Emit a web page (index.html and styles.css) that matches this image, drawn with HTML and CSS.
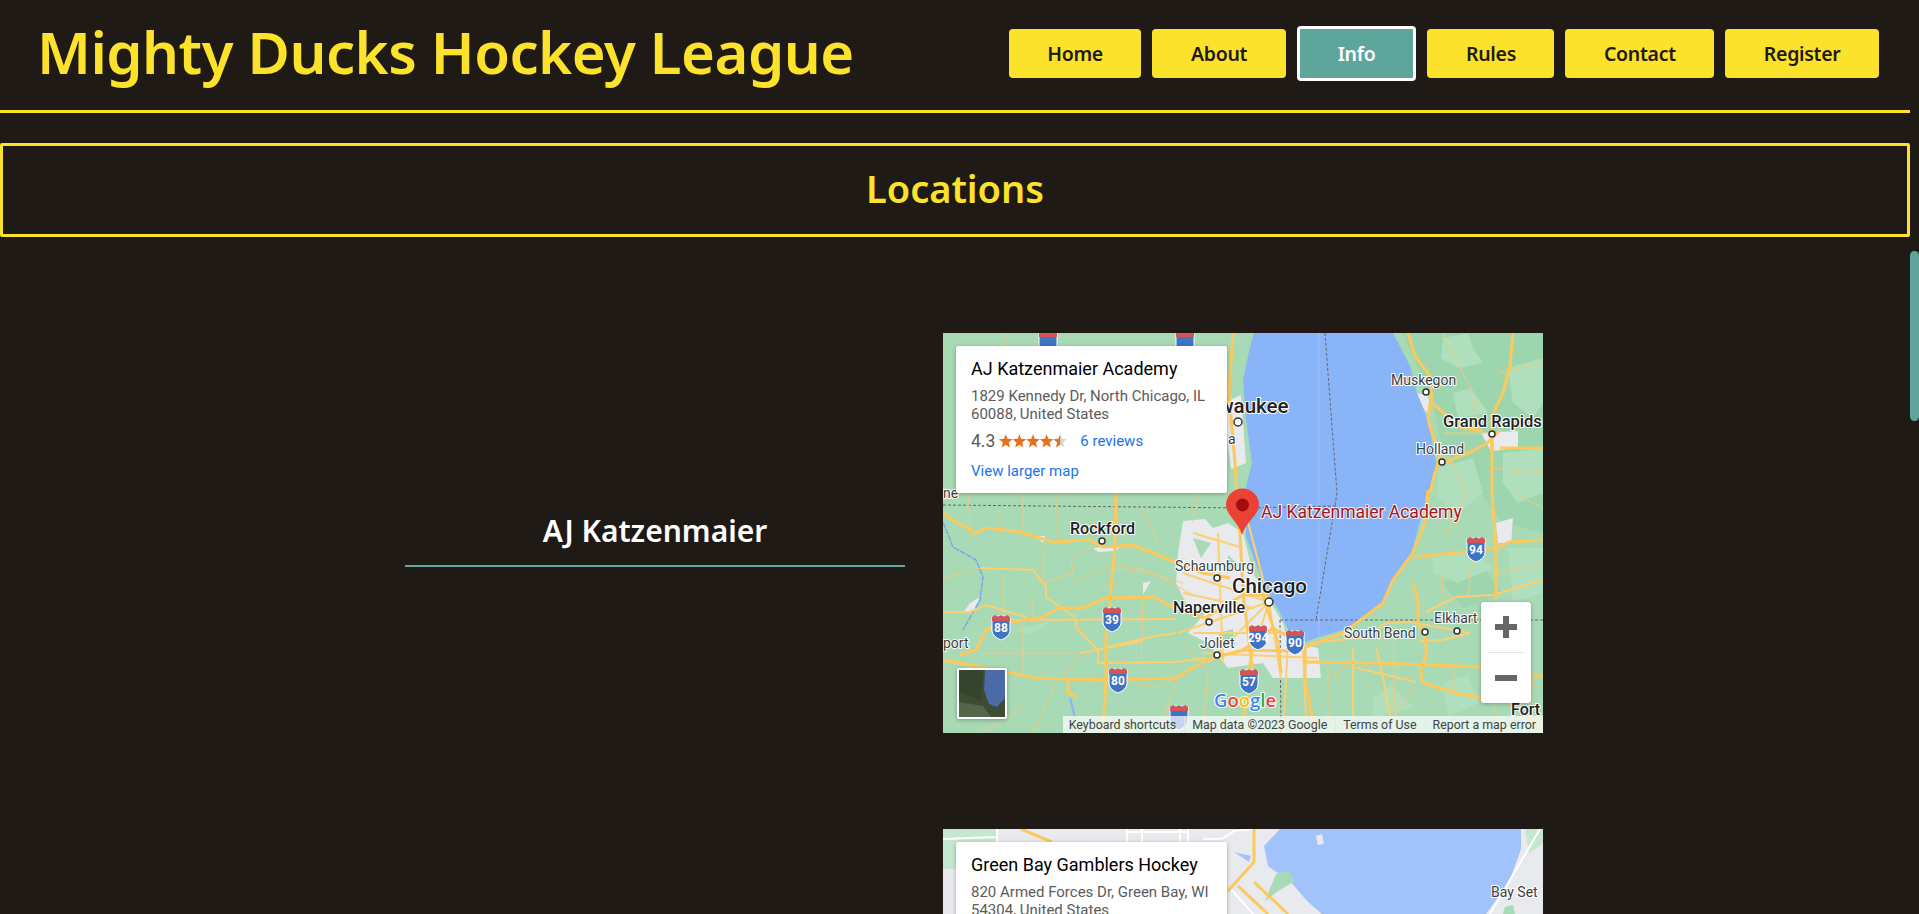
FILE: index.html
```html
<!DOCTYPE html>
<html>
	<head>
		<meta charset="utf-8">
		<title>Mighty Ducks Hockey League</title>
		<link rel="stylesheet" href="styles.css">
	</head>
	<body>
		<div class="page">
			<header class="top">
				<h1>Mighty Ducks Hockey League</h1>
				<nav class="nav">
					<a href="#">Home</a>
					<a href="#">About</a>
					<a href="#" class="current">Info</a>
					<a href="#">Rules</a>
					<a href="#">Contact</a>
					<a href="#">Register</a>
				</nav>
			</header>
			<h2 class="banner">Locations</h2>

			<div class="location">
				<h3>AJ Katzenmaier</h3>
				<div class="map">
					<svg class="map-art" viewBox="0 0 600 400">
						<defs>
							<g id="shield">
								<path d="M-9 -10 Q0 -13 9 -10 L9 4 Q8 10 0 13 Q-8 10 -9 4 Z" fill="#3f74c4" stroke="#fff" stroke-width="1"/>
								<path d="M-9 -10 L-6 -12 L-3 -10 L0 -12 L3 -10 L6 -12 L9 -10 L9 -6 L-9 -6 Z" fill="#d3555a"/>
							</g>
						</defs>
						<rect width="600" height="400" fill="#a8dab5"/>
						<!-- darker and paler land on the east side -->
						<g fill="#9dd6ae">
							<path d="M460 0 L600 0 L600 200 L560 190 L530 150 L500 120 L490 70 Z"/>
							<path d="M500 250 L540 235 L560 260 L520 275 Z"/>
						</g>
						<g fill="#b0dfbd">
							<path d="M500 5 L525 0 L530 15 L540 30 L515 35 L498 25 Z"/>
							<path d="M510 60 L528 55 L545 80 L515 85 Z"/>
							<path d="M565 35 L600 25 L600 70 L590 85 L570 70 Z"/>
							<path d="M560 120 L600 115 L600 160 L575 170 L560 150 Z"/>
							<path d="M495 135 L530 125 L540 160 L515 180 L495 165 Z"/>
							<path d="M490 225 L530 218 L550 235 L515 250 L490 240 Z"/>
							<path d="M565 215 L600 215 L600 260 L570 270 Z"/>
							<path d="M430 365 L450 352 L470 375 L430 384 Z"/>
							<path d="M500 350 L525 342 L535 370 L505 384 Z"/>
							<path d="M75 296 L110 288 L85 302 Z"/>
						</g>
						<!-- towns -->
						<g fill="#e8eaed">
							<path d="M240 188 L262 186 L270 195 L285 190 L300 200 L310 240 L340 290 L345 310 L375 315 L378 345 L330 345 L320 330 L285 335 L265 310 L245 300 L262 280 L243 270 L233 250 L235 220 Z"/>
							<path d="M280 70 L298 62 L303 130 L288 136 Z"/>
							<path d="M538 100 L575 98 L575 115 L548 118 Z"/>
							<path d="M473 60 L485 62 L487 80 L482 78 Z"/>
							<path d="M150 215 L180 212 L172 218 L155 219 Z"/>
							<path d="M92 203 L102 203 L100 210 Z"/>
							<path d="M27 270 L37 264 L30 280 L20 280 Z"/>
							<path d="M200 250 L208 248 L200 262 Z"/>
							<path d="M553 190 L570 185 L568 210 L555 210 Z"/>
						</g>
						<g fill="#a8dab5">
							<path d="M275 300 L290 296 L292 312 L280 312 Z"/>
							<path d="M250 205 L268 210 L258 225 Z"/>
							<path d="M285 222 L296 232 L284 240 Z"/>
						</g>
						<!-- lake -->
						<path d="M311 0 L450 0 L467 33 L474 60 L485 87 L494 133 L485 160 L473 204 L467 224 L447 250 L440 270 L420 287 L400 297 L373 305 L363 309 L347 300 L337 280 L320 250 L303 204 L303 154 L309 130 L303 87 L300 47 L307 14 Z" fill="#8ab4f8"/>
						<path d="M376 0 L376 305" stroke="#9dc0f9" stroke-width="1"/>
						<!-- river -->
						<path d="M0 189 L10 214 L33 227 L40 244 L37 267 L20 297" fill="none" stroke="#7aa7ea" stroke-width="1.500" stroke-dasharray="6 1"/>
						<path d="M127 365 L132 385" fill="none" stroke="#8ab4f8" stroke-width="2"/>
						<!-- borders -->
						<g fill="none" stroke="#666" stroke-width="1" stroke-dasharray="3 2">
							<path d="M0 172 L303 175 L395 173"/>
							<path d="M382 0 L394 160 L373 287"/>
							<path d="M337 287 L600 287"/>
							<path d="M337 287 L338 400"/>
						</g>
						<!-- small roads -->
						<g fill="none" stroke="#f0cb7f" stroke-width="1">
							<path d="M25 160 L28 205 M57 175 L57 200 M80 160 L80 198 M113 160 L113 205"/>
							<path d="M100 215 L100 250 L130 240 L128 225 L165 205"/>
							<path d="M0 245 L38 235 M60 240 L60 290 M75 250 L90 265 L90 285"/>
							<path d="M130 250 L165 235 L210 240 L250 262"/>
							<path d="M200 175 L215 212 M200 265 L198 335 M175 230 L240 250"/>
							<path d="M40 320 L80 320 L138 320 L120 345"/>
							<path d="M80 290 L80 345 M115 345 L90 400 M40 400 L85 370"/>
							<path d="M190 350 L215 355 L240 340"/>
							<path d="M20 130 L50 90 M60 0 L70 30"/>
							<path d="M250 0 L245 70 M270 120 L252 175 L250 190"/>
							<path d="M235 345 L215 400 M240 310 L265 340 L260 400"/>
							<path d="M500 0 L530 60 L535 95 M500 100 L545 100 M555 40 L600 30 M550 135 L600 140"/>
							<path d="M503 120 L525 160 L500 205 M500 240 L498 290 M530 225 L525 262"/>
							<path d="M570 160 L600 175 M555 240 L600 230 M580 290 L580 340"/>
							<path d="M450 300 L452 385 M510 335 L510 358 M470 355 L450 385 M390 345 L410 325"/>
							<path d="M385 335 L385 400 M540 340 L560 400 M590 345 L585 400"/>
						</g>
						<!-- roads in and around the city -->
						<g fill="none" stroke="#fccf70" stroke-width="2">
							<path d="M326 269 L300 170 M326 269 L240 240 M326 269 L235 300 M326 269 L265 330 M326 269 L300 350 M326 269 L338 345"/>
							<path d="M250 200 L300 215 M240 260 L310 275 M275 200 L280 330 M250 300 L360 300 M260 320 L375 325 M345 310 L340 400"/>
							<path d="M0 279 L27 279 L43 272 L83 284"/>
							<path d="M38 235 L90 237 L103 254 L103 264 L133 285"/>
							<path d="M67 287 L233 286"/>
							<path d="M133 287 L133 294 L155 317 L155 330 L233 329 L263 325"/>
							<path d="M138 320 L200 308 M165 314 L207 304 L233 300"/>
							<path d="M410 314 L410 384 M433 314 L440 344 L447 384 M360 317 L363 384 M410 334 L473 349"/>
							<path d="M367 310 L423 304 L443 290 L467 289 L527 300 L500 307 L477 308"/>
							<path d="M483 279 L513 264 L550 262 L600 247"/>
						</g>
						<!-- main roads -->
						<g fill="none" stroke="#fdc85c" stroke-width="3" stroke-linejoin="round">
							<path d="M0 180 L13 189 L33 200 L43 195 L77 199 L110 209 L147 207 L160 214 L190 212 L227 227 L260 240 L287 245"/>
							<path d="M173 157 L172 214 L167 264 L168 290 L163 300 L163 347 L160 400"/>
							<path d="M67 289 L97 285 L117 275 L140 275 L163 265 L210 264 L230 274 L262 285"/>
							<path d="M17 322 L33 317 L43 297 L50 294"/>
							<path d="M0 327 L17 330 L63 339 L93 345 L167 347 L233 345 L263 327 L300 317 L345 318"/>
							<path d="M125 344 L125 360 L135 364"/>
							<path d="M363 314 L400 300 L440 270 L450 247 L470 220 L482 190 L485 157"/>
							<path d="M470 224 L523 219 L553 215 L567 209 L600 207"/>
							<path d="M570 0 L567 33 L560 60 L549 83 L549 160 L553 215 L553 267"/>
							<path d="M470 250 L475 267 L475 290 L483 307 L483 324 L477 337 L480 350 L513 360 L567 370 L600 395"/>
							<path d="M363 329 L433 330 L487 332 L567 335 L600 344"/>
							<path d="M465 0 L472 23 L487 43 L489 70 L504 83 L520 95 L540 98"/>
							<path d="M487 70 L485 87 L497 123 L490 147 L487 160"/>
							<path d="M495 132 L530 118 L544 110 L557 97 M557 115 L600 115 M549 97 L549 118"/>
							<path d="M290 0 L286 60 L292 130 L297 200 L300 260 L310 340 L300 385"/>
							<path d="M318 255 L335 310 L338 340"/>
							<path d="M262 285 L300 262 L326 262"/>
							<path d="M300 317 L330 295 L363 314"/>
							<path d="M362 310 L362 345 L372 400"/>
						</g>
						<!-- city dots -->
						<g fill="#fff" stroke="#333" stroke-width="1.500">
							<circle cx="483" cy="59" r="3"/>
							<circle cx="549" cy="101" r="3"/>
							<circle cx="499" cy="129" r="3"/>
							<circle cx="295" cy="89" r="4"/>
							<circle cx="159" cy="208" r="3"/>
							<circle cx="274" cy="245" r="3"/>
							<circle cx="326" cy="269" r="4"/>
							<circle cx="266" cy="289" r="3"/>
							<circle cx="274" cy="322" r="3"/>
							<circle cx="482" cy="299" r="3"/>
							<circle cx="514" cy="298" r="3"/>
						</g>
						<!-- highway shields -->
						<use href="#shield" x="105" y="10"/>
						<use href="#shield" x="242" y="10"/>
						<use href="#shield" x="58" y="294"/>
						<use href="#shield" x="169" y="286"/>
						<use href="#shield" x="315" y="304"/>
						<use href="#shield" x="352" y="309"/>
						<use href="#shield" x="175" y="347"/>
						<use href="#shield" x="306" y="348"/>
						<use href="#shield" x="533" y="216"/>
						<use href="#shield" x="236" y="384"/>
						<g class="shield-num">
							<text x="58" y="299">88</text>
							<text x="169" y="291">39</text>
							<text x="315" y="309">294</text>
							<text x="352" y="314">90</text>
							<text x="175" y="352">80</text>
							<text x="306" y="353">57</text>
							<text x="533" y="221">94</text>
						</g>
						<!-- place names -->
						<g class="place">
							<text x="448" y="52">Muskegon</text>
							<text x="473" y="121">Holland</text>
							<text x="232" y="238">Schaumburg</text>
							<text x="257" y="315">Joliet</text>
							<text x="401" y="305">South Bend</text>
							<text x="491" y="290">Elkhart</text>
							<text x="0" y="315">port</text>
							<text x="0" y="165">ne</text>
							<text x="285" y="111">a</text>
						</g>
						<g class="place strong">
							<text class="wide" x="500" y="94">Grand Rapids</text>
							<text x="127" y="201">Rockford</text>
							<text x="230" y="280">Naperville</text>
							<text x="568" y="382">Fort</text>
							<text class="big" x="247" y="80">Milwaukee</text>
							<text class="big" x="289" y="260">Chicago</text>
						</g>
						<text class="pin-label" x="318" y="185">AJ Katzenmaier Academy</text>
						<path d="M299 202 C295 188 283 182 283 172 A16 16 0 0 1 316 172 C316 182 303 188 299 202 Z" fill="#ea4335"/>
						<circle cx="299.500" cy="172" r="6.500" fill="#a50e0e"/>
						<text class="google" x="271" y="374"><tspan fill="#4285f4">G</tspan><tspan fill="#ea4335">o</tspan><tspan fill="#fbbc05">o</tspan><tspan fill="#4285f4">g</tspan><tspan fill="#34a853">l</tspan><tspan fill="#ea4335">e</tspan></text>
					</svg>
					<div class="map-card">
						<div class="map-card-title">AJ Katzenmaier Academy</div>
						<div class="map-card-addr">1829 Kennedy Dr, North Chicago, IL 60088, United States</div>
						<div class="map-card-rate">
							<span class="rate-num">4.3</span>
							<svg class="stars" viewBox="0 0 70 14">
								<defs>
									<polygon id="star" points="7,0 8.800,4.800 14,5.200 10,8.500 11.300,13.600 7,10.800 2.700,13.600 4,8.500 0,5.200 5.200,4.800"/>
								</defs>
								<use href="#star" x="0" fill="#e7711b"/>
								<use href="#star" x="14" fill="#e7711b"/>
								<use href="#star" x="28" fill="#e7711b"/>
								<use href="#star" x="42" fill="#e7711b"/>
								<use href="#star" x="56" fill="#d5d5d5"/>
								<path d="M56 5.200 L61.200 4.800 L63 0 L63 10.800 L58.700 13.600 L60 8.500 Z" fill="#e7711b"/>
							</svg>
							<a href="#" class="map-link">6 reviews</a>
						</div>
						<a href="#" class="map-link">View larger map</a>
					</div>
					<div class="map-thumb">
						<svg viewBox="0 0 46 47">
							<rect width="46" height="47" fill="#3d4c33"/>
							<path d="M0 0 L24 0 L22 30 L0 22 Z" fill="#35432f"/>
							<path d="M26 0 L46 0 L46 28 L38 37 L30 34 L25 20 Z" fill="#4a6aa8"/>
							<path d="M0 32 L24 36 L32 47 L0 47 Z" fill="#55654a"/>
						</svg>
					</div>
					<div class="map-zoom">
						<button type="button" class="zoom-btn zoom-plus"></button>
						<div class="zoom-line"></div>
						<button type="button" class="zoom-btn"></button>
					</div>
					<div class="map-attr">
						<span>Keyboard shortcuts</span>
						<span>Map data ©2023 Google</span>
						<span>Terms of Use</span>
						<span>Report a map error</span>
					</div>
				</div>
			</div>

			<div class="location">
				<h3>Green Bay</h3>
				<div class="map">
					<svg class="map-art" viewBox="0 0 600 400">
						<rect width="600" height="400" fill="#e8eaed"/>
						<path d="M0 0 L54 0 L54 13 L36 40 L0 40 Z" fill="#c6e7cf"/>
						<path d="M337 0 L578 0 L578 20 L566 53 L543 85 L530 400 L400 400 L379 85 L364 72 L348 53 L325 37 L321 17 Z" fill="#a1c2fa"/>
						<path d="M373 7 L379 5 L381 15 L375 16 Z" fill="#e8eaed"/>
						<path d="M582 0 L600 0 L600 14 L586 25 Z" fill="#c6e7cf"/>
						<path d="M333 45 L345 42 L352 52 L335 62 L322 72 Z" fill="#a8dab5"/>
						<path d="M562 78 L570 76 L572 85 L560 85 Z" fill="#a8dab5"/>
						<path d="M291 23 L308 27 L306 33 Z" fill="#a1c2fa"/>
						<g fill="none" stroke="#fff" stroke-width="2">
							<path d="M0 10 L54 8 M54 0 L54 13"/>
							<path d="M184 3 L245 3 M184 0 L184 13 M199 0 L199 13 M237 0 L237 13 M245 0 L245 13"/>
							<path d="M260 10 L279 10 L291 2 L311 0"/>
							<path d="M597 0 L547 85"/>
							<path d="M288 60 L310 85"/>
						</g>
						<g fill="none" stroke="#fdc85c" stroke-width="3">
							<path d="M78 0 L109 13"/>
							<path d="M311 0 L311 33 L285 62"/>
							<path d="M311 53 L345 85"/>
							<path d="M295 57 L325 85"/>
						</g>
						<g class="place">
							<text x="548" y="68">Bay Set</text>
						</g>
					</svg>
					<div class="map-card">
						<div class="map-card-title">Green Bay Gamblers Hockey</div>
						<div class="map-card-addr">820 Armed Forces Dr, Green Bay, WI 54304, United States</div>
					</div>
				</div>
			</div>
		</div>
		<aside class="scroll-rail"><div class="scroll-thumb"></div></aside>
	</body>
</html>
```

FILE: styles.css
```css
body,
h1,
h2,
h3 {
	margin: 0;
	padding: 0;
}
body {
	height: 914px;
	overflow: hidden;
	display: flex;
	background-color: #1f1a15;
	font-family: "Noto Sans", "Liberation Sans", sans-serif;
}
.page {
	width: 1910px;
	flex: none;
}
.top {
	height: 102px;
	padding: 0 31px 8px 37px;
	display: flex;
	justify-content: space-between;
	align-items: center;
	border-bottom: 3px solid #fce22a;
}
.top h1 {
	font-size: 58px;
	font-weight: 600;
	letter-spacing: -0.500px;
	color: #fce22a;
}
.nav {
	display: flex;
	align-items: center;
	gap: 11px;
	margin-top: 5px;
}
.nav a {
	height: 49px;
	padding: 0 38.500px;
	display: flex;
	align-items: center;
	border-radius: 4px;
	background-color: #fce22a;
	color: #1f1a15;
	font-size: 19.500px;
	font-weight: 600;
	letter-spacing: -0.300px;
	text-decoration: none;
}
.nav a.current {
	padding: 0 38px;
	border: 3px solid #fff;
	background-color: #5ea59b;
	color: #fff;
}
.banner {
	margin-top: 30px;
	height: 88px;
	line-height: 84px;
	border: 3px solid #fce22a;
	border-radius: 2px;
	text-align: center;
	color: #fce22a;
	font-size: 38px;
	font-weight: 600;
}
.location {
	margin-top: 96px;
	padding-left: 405px;
	display: flex;
	align-items: center;
	gap: 38px;
}
.location h3 {
	width: 500px;
	height: 65px;
	line-height: 61px;
	border-bottom: 2px solid #5ea59b;
	text-align: center;
	color: #fff;
	font-size: 30px;
	font-weight: 600;
}
.map {
	position: relative;
	width: 600px;
	height: 400px;
	overflow: hidden;
	flex: none;
	font-family: Roboto, "Liberation Sans", sans-serif;
}
.map-art {
	display: block;
	width: 600px;
	height: 400px;
}
.place text {
	font-family: Roboto, sans-serif;
	font-size: 14px;
	fill: #3c4043;
	stroke: #fff;
	stroke-width: 2px;
	paint-order: stroke;
}
.place.strong text {
	font-size: 16px;
	font-weight: 500;
	fill: #202124;
}
.place.strong .wide {
	font-size: 16.500px;
}
.place.strong .big {
	font-size: 20.500px;
}
.shield-num text {
	font-family: Roboto, sans-serif;
	font-size: 12px;
	font-weight: 700;
	fill: #fff;
	text-anchor: middle;
}
.pin-label {
	font-family: Roboto, sans-serif;
	font-size: 17.500px;
	fill: #a8141a;
	stroke: rgba(255, 255, 255, 0.85);
	stroke-width: 2px;
	paint-order: stroke;
}
.google {
	font-family: "Open Sans", sans-serif;
	font-size: 18.500px;
	font-weight: 600;
	stroke: #fff;
	stroke-width: 2px;
	paint-order: stroke;
}
.map-card {
	position: absolute;
	left: 13px;
	top: 13px;
	width: 271px;
	height: 147px;
	padding: 12px 15px;
	box-sizing: border-box;
	background-color: #fff;
	border-radius: 2px;
	box-shadow: 0 1px 4px rgba(0, 0, 0, 0.3);
}
.map-card-title {
	font-size: 18px;
	font-weight: 400;
	line-height: 22px;
	color: #000;
}
.map-card-addr {
	margin-top: 7px;
	font-size: 15px;
	line-height: 18px;
	color: #5b5b5b;
}
.map-card-rate {
	margin-top: 6px;
	height: 24px;
	display: flex;
	align-items: center;
}
.rate-num {
	font-size: 17.500px;
	color: #5b5b5b;
}
.stars {
	width: 68px;
	height: 14px;
	margin: 0 13px 0 4px;
}
.map-link {
	font-size: 15px;
	color: #1a73e8;
	text-decoration: none;
}
.map-card > .map-link {
	display: block;
	margin-top: 9px;
}
.map-thumb {
	position: absolute;
	left: 14px;
	top: 335px;
	width: 46px;
	height: 47px;
	border: 2px solid #fff;
	border-radius: 2px;
	overflow: hidden;
	box-shadow: 0 1px 4px rgba(0, 0, 0, 0.3);
}
.map-thumb svg {
	display: block;
	width: 46px;
	height: 47px;
}
.map-zoom {
	position: absolute;
	left: 538px;
	top: 269px;
	width: 50px;
	height: 101px;
	background-color: #fff;
	border-radius: 3px;
	box-shadow: 0 1px 4px rgba(0, 0, 0, 0.3);
	display: flex;
	flex-direction: column;
	align-items: center;
}
.zoom-btn {
	position: relative;
	width: 50px;
	height: 50px;
	padding: 0;
	border: 0;
	background: none;
}
.zoom-btn::before {
	content: "";
	position: absolute;
	left: 14px;
	top: 22px;
	width: 22px;
	height: 6px;
	background-color: #666;
}
.zoom-plus::after {
	content: "";
	position: absolute;
	left: 22px;
	top: 14px;
	width: 6px;
	height: 22px;
	background-color: #666;
}
.zoom-line {
	width: 37px;
	height: 1px;
	background-color: #e6e6e6;
}
.map-attr {
	position: absolute;
	right: 0;
	bottom: 0;
	height: 17px;
	padding-right: 7px;
	display: flex;
	align-items: center;
	gap: 8px;
	background-color: rgba(255, 255, 255, 0.7);
	font-size: 12.400px;
	color: #444;
}
.map-attr span + span {
	padding-left: 7px;
	border-left: 1px solid #e6e6e6;
}
.map-attr span:first-child {
	padding-left: 6px;
}
.scroll-rail {
	width: 9px;
	flex: none;
}
.scroll-thumb {
	margin-top: 251px;
	height: 170px;
	border-radius: 5px;
	background-color: #5ea59b;
}
```
